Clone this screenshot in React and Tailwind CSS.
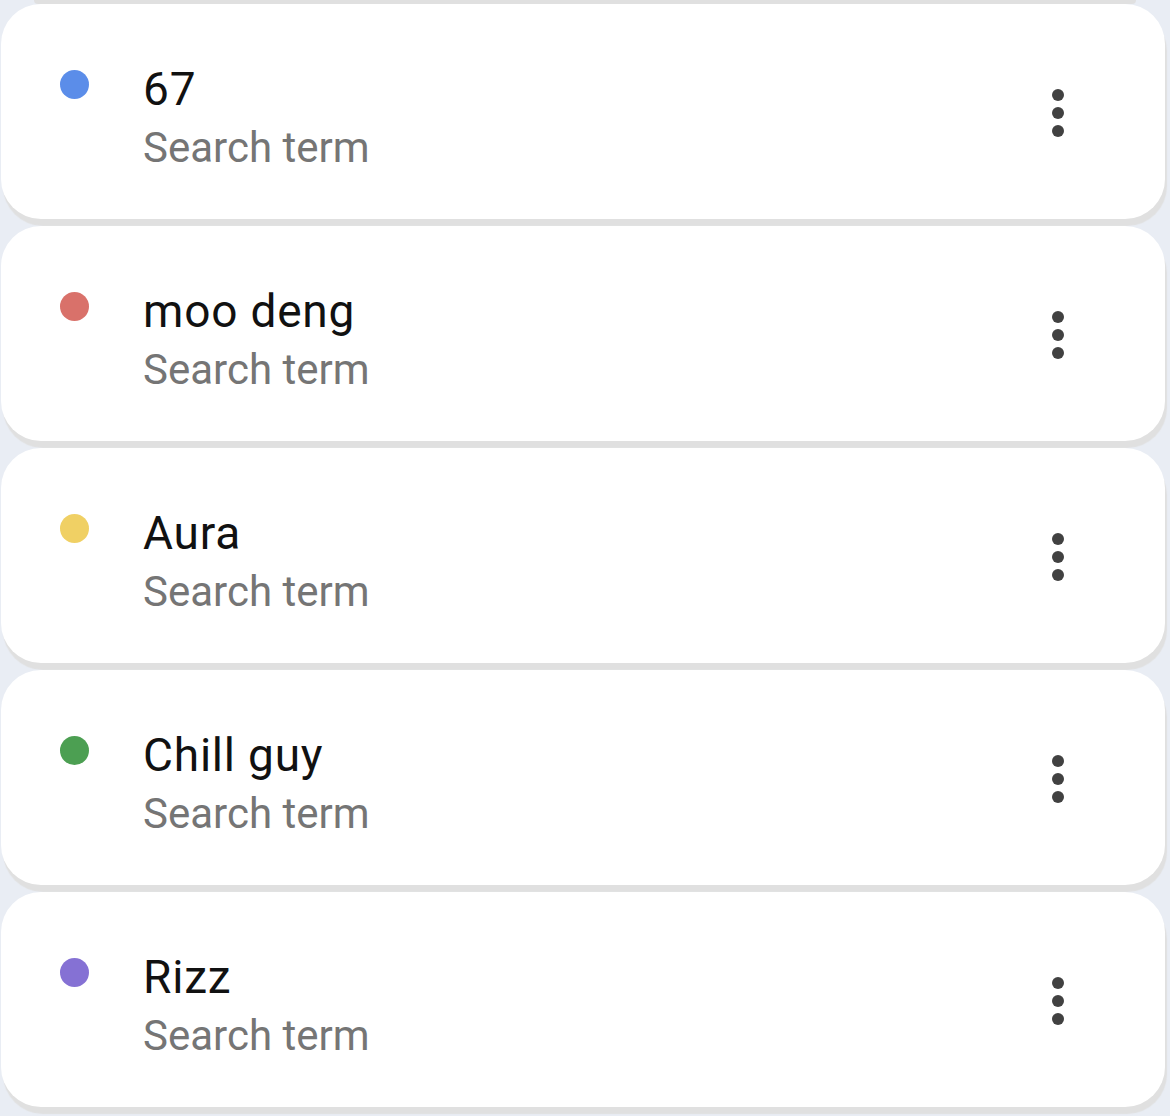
const terms = [
  { name: '67', color: 'bg-[#5b8de9]' },
  { name: 'moo deng', color: 'bg-[#d9716a]' },
  { name: 'Aura', color: 'bg-[#f0d064]' },
  { name: 'Chill guy', color: 'bg-[#4c9f52]' },
  { name: 'Rizz', color: 'bg-[#8571d4]' },
];

const TermCard = ({ name, color }) => (
  <div className="h-[215px] flex items-center bg-white rounded-[40px] pl-[59px] pr-[101px] shadow-[2px_7px_1px_0_#e0e0e0]">
    <div className="flex-1 flex items-start self-stretch pt-[56px] gap-[54px]">
      <span className={`mt-[10px] w-[29px] h-[29px] rounded-full shrink-0 ${color}`} />
      <div className="flex flex-col">
        <span className="text-[46px] leading-[58px] tracking-[0.8px] text-[#111111]">{name}</span>
        <span className="text-[42px] leading-[60px] text-[#757575]">Search term</span>
      </div>
    </div>
    <button className="mt-[3px] flex flex-col gap-[6px]">
      <span className="w-[12px] h-[12px] rounded-full bg-[#414141]" />
      <span className="w-[12px] h-[12px] rounded-full bg-[#414141]" />
      <span className="w-[12px] h-[12px] rounded-full bg-[#414141]" />
    </button>
  </div>
);

export default function App() {
  return (
    <div
      className="min-h-screen bg-[#e9edf4] overflow-hidden"
      style={{ fontFamily: 'Roboto, "Noto Sans", sans-serif' }}
    >
      {/* tail of the card above, cut off by the screen edge */}
      <div className="h-[4px] mx-[34px] bg-[#e0e0e0] rounded-b-[6px]" />
      <div className="flex flex-col gap-[7px] pl-[1px] pr-[5px]">
        {terms.map((t) => (
          <TermCard key={t.name} {...t} />
        ))}
      </div>
    </div>
  );
}
